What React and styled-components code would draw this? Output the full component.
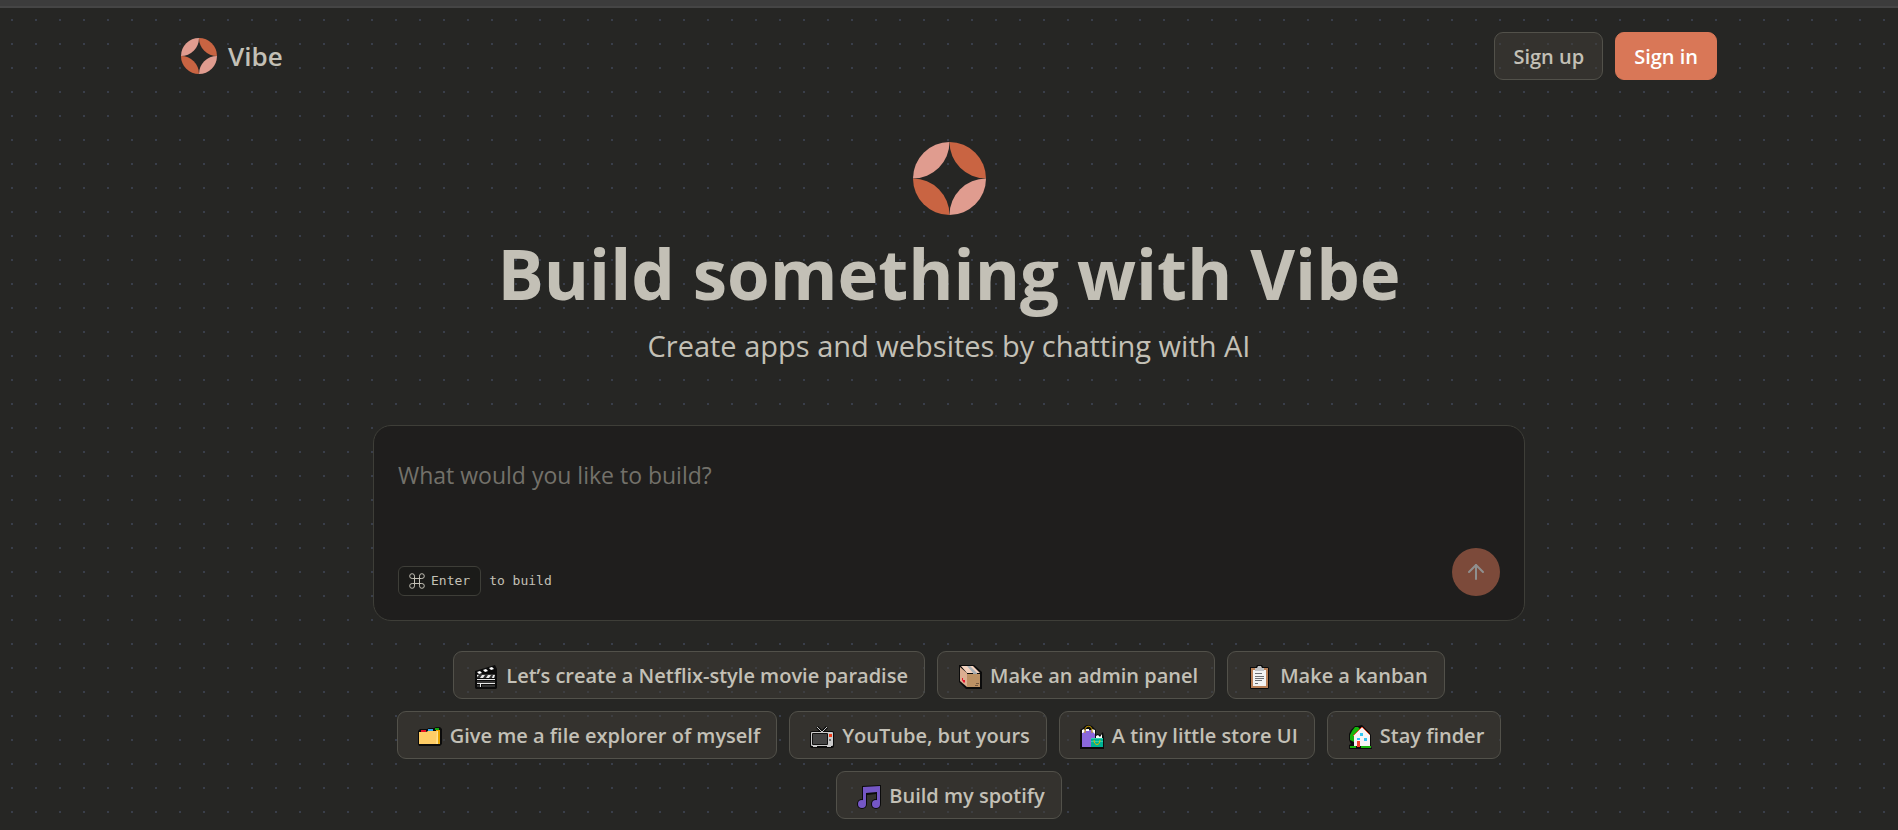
import React from "react";
import styled, { createGlobalStyle, css } from "styled-components";
import { ArrowUp } from "lucide-react";

const GlobalStyle = createGlobalStyle`
  *, *::before, *::after { box-sizing: border-box; }
  body {
    margin: 0;
    background: #262624;
    color: #c3c0b6;
    font-family: "Segoe UI", "Open Sans", "Noto Sans", sans-serif;
  }
  button, textarea { font-family: inherit; }
`;

const Page = styled.div`
  min-height: 100vh;
  display: flex;
  flex-direction: column;
`;

const TopStrip = styled.div`
  height: 8px;
  flex: none;
  background: #3c3c3c;
  border-bottom: 2px solid #454545;
`;

const Canvas = styled.div`
  flex: 1;
  background-image: radial-gradient(#393e4a 1px, transparent 1px);
  background-size: 24px 24px;
`;

const Nav = styled.nav`
  display: flex;
  align-items: center;
  justify-content: space-between;
  max-width: 1536px;
  margin: 0 auto;
  padding: 24px 0;
`;

const Brand = styled.a`
  display: flex;
  align-items: center;
  gap: 11px;
  color: inherit;
  text-decoration: none;
  font-size: 26px;
  line-height: 36px;
  font-weight: 600;
`;

const Actions = styled.div`
  display: flex;
  gap: 12px;
`;

const Button = styled.button`
  display: inline-flex;
  align-items: center;
  gap: 8px;
  height: 48px;
  padding: 2px 18px 0;
  border: 1px solid #52514a;
  border-radius: 9px;
  background: rgba(65, 62, 56, 0.5);
  color: #c3c0b6;
  font-size: 20px;
  line-height: 28px;
  font-weight: 600;
  white-space: nowrap;
  cursor: pointer;
  ${(p) =>
    p.$primary &&
    css`
      border-color: #d97757;
      background: #d97757;
      color: #fff;
    `}
`;

const Chip = styled(Button)`
  padding: 2px 16px 0 20px;
`;

const Main = styled.main`
  display: flex;
  flex-direction: column;
  align-items: center;
  max-width: 1152px;
  margin: 0 auto;
  padding: 38px 0 8px;
`;

const Title = styled.h1`
  margin: 22px 0 0;
  font-size: 69px;
  line-height: 72px;
  font-weight: 700;
  text-align: center;
`;

const Subtitle = styled.p`
  margin: 18px 0 0;
  font-size: 29px;
  line-height: 38px;
  text-align: center;
`;

const Prompt = styled.form`
  width: 100%;
  margin-top: 60px;
  padding: 24px;
  border: 1px solid #3e3e38;
  border-radius: 18px;
  background: #1f1e1d;
`;

const PromptInput = styled.textarea`
  display: block;
  width: 100%;
  height: 98px;
  padding: 9px 0;
  border: 0;
  outline: 0;
  resize: none;
  background: transparent;
  color: #c3c0b6;
  font-size: 23px;
  line-height: 32px;
  &::placeholder {
    color: #73716a;
    opacity: 1;
  }
`;

const PromptFooter = styled.div`
  display: flex;
  align-items: flex-end;
  justify-content: space-between;
`;

const Hint = styled.div`
  display: flex;
  align-items: center;
  gap: 8px;
  font-family: "DejaVu Sans Mono", monospace;
  font-size: 13px;
  line-height: 18px;
`;

const Kbd = styled.kbd`
  display: inline-flex;
  align-items: center;
  gap: 6px;
  height: 30px;
  padding: 0 10px;
  border: 1px solid #3e3e38;
  border-radius: 6px;
  background: #1b1b19;
  font: inherit;
`;

const SendButton = styled.button`
  display: grid;
  place-items: center;
  width: 48px;
  height: 48px;
  padding: 0;
  border: 0;
  border-radius: 50%;
  background: #d97757;
  color: #fff;
  opacity: 0.5;
`;

const Suggestions = styled.div`
  display: flex;
  flex-wrap: wrap;
  justify-content: center;
  gap: 12px;
  width: 100%;
  margin-top: 30px;
`;

const EmojiSvg = styled.svg`
  flex: none;
  margin-top: 2px;
`;

const Logo = ({ size }) => (
  <svg width={size} height={size} viewBox="0 0 72 72" role="img" aria-label="Vibe logo">
    <path d="M36 0A36 36 0 0 0 0 36A36 36 0 0 0 36 0Z" fill="#e09c8f" />
    <path d="M36 0A36 36 0 0 1 72 36A36 36 0 0 1 36 0Z" fill="#c96442" />
    <path d="M0 36A36 36 0 0 0 36 72A36 36 0 0 0 0 36Z" fill="#c96442" />
    <path d="M72 36A36 36 0 0 1 36 72A36 36 0 0 1 72 36Z" fill="#e09c8f" />
  </svg>
);

const CommandIcon = () => (
  <svg width="16" height="16" viewBox="0 0 16 16" fill="none" stroke="#c3c0b6" aria-hidden="true">
    <path d="M5.5 5.5V3.2A2.4 2.4 0 1 0 3.2 5.5H12.8A2.4 2.4 0 1 0 10.5 3.2V12.8A2.4 2.4 0 1 0 12.8 10.5H3.2A2.4 2.4 0 1 0 5.5 12.8Z" />
  </svg>
);

const emojis = {
  clapper: (
    <>
      <path d="M1 6L21 0L23 4V23L22 24H2L1 23Z" fill="#0b0b0b" />
      <path d="M3 9H21V13H3ZM3 16H21V18H3ZM3 20H6V22H3ZM8 20H21V22H8Z" fill="#343434" />
      <path d="M3 14H21V15H3ZM3 18H21V19H3ZM6 19H7V22H6Z" fill="#e6e6e6" />
      <path d="M3 7L6 6L8 8L5 9ZM9 5L12 4L14 6L11 7ZM15 3L18 2L20 4L17 5Z" fill="#fff" />
      <path d="M3 10H5L3 12ZM8 10H11L9 13H6ZM14 10H17L15 13H12ZM19 10H21L20 13H18Z" fill="#e6e6e6" />
    </>
  ),
  box: (
    <>
      <path d="M1 0H16L24 7V24H8L1 17Z" fill="#0b0b0b" />
      <path d="M2 2L9 8V22L2 16Z" fill="#dcae91" />
      <path d="M3 1H15L22 8H9Z" fill="#f5d3bf" />
      <path d="M9 9H22V22H9Z" fill="#bc9164" />
      <path d="M9 1H12L19 8H15Z" fill="#aab0b5" />
      <path d="M15 8H19V9H15Z" fill="#9ba3aa" />
      <path d="M4 13H5V15H7V17L6 18L4 15Z" fill="#e8112d" />
      <path d="M18 18H21V19H18ZM17 20H20V21H17Z" fill="#765a40" />
    </>
  ),
  clipboard: (
    <>
      <path d="M2 2H8L9 0H14L15 2H20L21 3V23L20 24H3L2 23Z" fill="#0b0b0b" />
      <path d="M3 3H20V23H3Z" fill="#b98057" />
      <path d="M5 5H18V21H5Z" fill="#f3f3f3" />
      <path d="M7 3H9L10 1H13L14 3H16V6H7Z" fill="#bfc2c5" />
      <path d="M7 8H14V9H7ZM7 11H16V12H7ZM7 13H16V14H7ZM7 15H14V16H7ZM7 18H10V19H7Z" fill="#6d7074" />
    </>
  ),
  folder: (
    <>
      <path d="M0 6L2 4H9L11 3H16L18 2H22L24 4V19L22 21H1L0 19Z" fill="#0b0b0b" />
      <path d="M3 5H8V7H3Z" fill="#e81224" />
      <path d="M10 4H15V6H10Z" fill="#31a8f0" />
      <path d="M17 3H21V5H17Z" fill="#16a610" />
      <path d="M18 5H22V19H18Z" fill="#e9a500" />
      <path d="M1 7H8L10 6H19V18L18 19H1Z" fill="#ffcd66" />
      <path d="M19 6H20V19H18Z" fill="#ffe08f" />
    </>
  ),
  tv: (
    <>
      <path d="M7 2L12 7L17 2" fill="none" stroke="#0b0b0b" strokeWidth="3" />
      <rect y="6" width="24" height="17" rx="2" fill="#0b0b0b" />
      <path d="M7 2L12 7L17 2" fill="none" stroke="#c8c8c8" />
      <rect x="1" y="7" width="22" height="14" rx="1" fill="#cbcbcb" />
      <path d="M3 21H7V22H3ZM17 21H21V22H17Z" fill="#cbcbcb" />
      <rect x="2" y="8" width="16" height="12" rx="1" fill="#111" />
      <rect x="3" y="9" width="14" height="10" fill="#434343" />
      <rect x="19" y="9" width="3" height="3" fill="#f03a17" />
      <rect x="19" y="14" width="2" height="2" fill="#6b6b6b" />
    </>
  ),
  bags: (
    <>
      <path d="M0 5L3 3L5 1L7 0H9L12 1L14 3L16 5V11L17 9L20 10L23 7L24 12V24H0Z" fill="#0b0b0b" />
      <path d="M2 7L4 5H13L15 7V22H2Z" fill="#8b68dc" />
      <path d="M2 5L4 4L5 6L3 8H2ZM6 4H9V6H6ZM12 4L15 5V9L12 6ZM16 11L18 10L20 12L22 9V13H16Z" fill="#fff" />
      <path d="M5 8V5C5 0 12 0 12 5V8" fill="none" stroke="#cda000" />
      <path d="M11 13H23V22H11Z" fill="#00b294" />
      <path d="M11 13H23V14H11ZM11 16H23V17H11Z" fill="#32d0ae" />
      <path d="M14 15C14 21 20 21 20 15" fill="none" stroke="#d6b400" />
    </>
  ),
  house: (
    <>
      <path d="M3 5L7 1H10L14 0L21 7L23 10V21L24 24H1V20L3 19L1 15V9Z" fill="#0b0b0b" />
      <path d="M4 6L7 2H10L12 4V20H6V17L2 15V10Z" fill="#16b40b" />
      <path d="M6 10L14 2L22 10V21H6Z" fill="#f6f3f5" />
      <path d="M5 11L14 2L22 10" fill="none" stroke="#e84b2b" />
      <path d="M12 8H15V11H12ZM9 13H12V15H9ZM16 13H19V16H16Z" fill="#32c5f4" />
      <path d="M9 16H12V22H9Z" fill="#ee432c" />
      <path d="M2 21H8V23H2ZM13 21H23V23H13Z" fill="#16b40b" />
    </>
  ),
  music: (
    <>
      <path d="M5 1L24 0V19H19V9L10 10V19H5Z" fill="#0b0b0b" />
      <circle cx="5" cy="19" r="5" fill="#0b0b0b" />
      <circle cx="19" cy="19" r="5" fill="#0b0b0b" />
      <path d="M6 19V2L23 1V19H20V7L9 8V19Z" fill="#7557c5" />
      <circle cx="5" cy="19" r="4" fill="#7557c5" />
      <circle cx="19" cy="19" r="4" fill="#7557c5" />
    </>
  ),
};

const suggestions = [
  ["clapper", "Let’s create a Netflix-style movie paradise"],
  ["box", "Make an admin panel"],
  ["clipboard", "Make a kanban"],
  ["folder", "Give me a file explorer of myself"],
  ["tv", "YouTube, but yours"],
  ["bags", "A tiny little store UI"],
  ["house", "Stay finder"],
  ["music", "Build my spotify"],
];

export default function App() {
  return (
    <Page>
      <GlobalStyle />
      <TopStrip />
      <Canvas>
        <Nav>
          <Brand href="#">
            <Logo size={36} />
            Vibe
          </Brand>
          <Actions>
            <Button type="button">Sign up</Button>
            <Button type="button" $primary>
              Sign in
            </Button>
          </Actions>
        </Nav>
        <Main>
          <Logo size={73} />
          <Title>Build something with Vibe</Title>
          <Subtitle>Create apps and websites by chatting with AI</Subtitle>
          <Prompt onSubmit={(e) => e.preventDefault()}>
            <PromptInput aria-label="Prompt" placeholder="What would you like to build?" />
            <PromptFooter>
              <Hint>
                <Kbd>
                  <CommandIcon />
                  Enter
                </Kbd>
                to build
              </Hint>
              <SendButton type="submit" aria-label="Build" disabled>
                <ArrowUp size={24} strokeWidth={2} />
              </SendButton>
            </PromptFooter>
          </Prompt>
          <Suggestions>
            {suggestions.map(([icon, label]) => (
              <Chip type="button" key={label}>
                <EmojiSvg width="24" height="24" viewBox="0 0 24 24" aria-hidden="true">
                  {emojis[icon]}
                </EmojiSvg>
                {label}
              </Chip>
            ))}
          </Suggestions>
        </Main>
      </Canvas>
    </Page>
  );
}
